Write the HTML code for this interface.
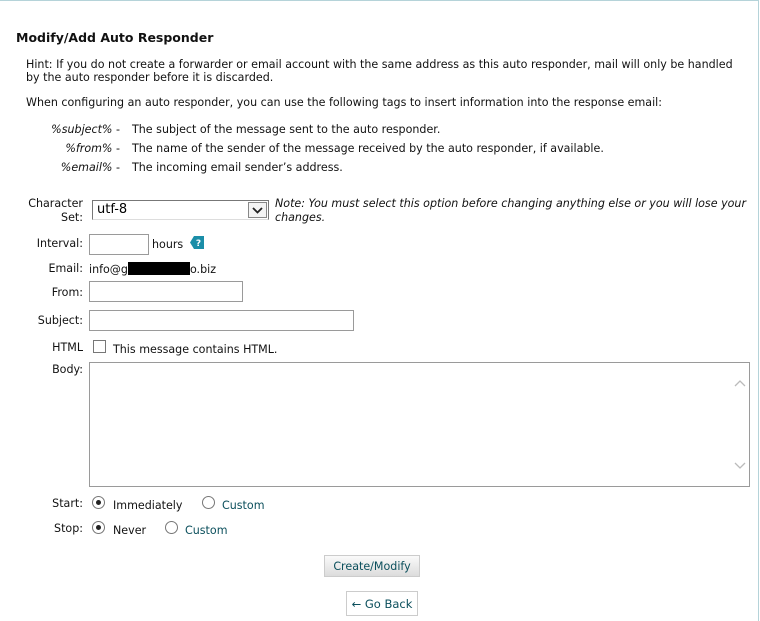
<!DOCTYPE html>
<html><head><meta charset="utf-8"><style>
*{margin:0;padding:0;box-sizing:border-box}
body{width:760px;height:621px;background:#fff;font-family:"DejaVu Sans","Liberation Sans",sans-serif;font-size:11.1px;color:#111;position:relative;overflow:hidden}
.frame{position:absolute;left:0;top:0;width:759px;height:621px;border-top:1px solid #b5d3d9;border-right:1px solid #b5d3d9}
.a{position:absolute;white-space:nowrap}
.lbl{position:absolute;right:677px;text-align:right;white-space:nowrap}
.inp{position:absolute;border:1px solid #9a9a9a;background:#fff}
.radio{position:absolute;width:13px;height:13px;border:1px solid #777;border-radius:50%;background:#fff}
.radio.on::after{content:"";position:absolute;left:3px;top:3px;width:5px;height:5px;border-radius:50%;background:#222}
.teal{color:#0b4f5c}
i{font-style:italic}
</style></head><body>
<div class="frame"></div>
<div class="a" style="left:16px;top:30px;font-weight:bold;font-size:12.5px">Modify/Add Auto Responder</div>
<div class="a" style="left:26px;top:58px;line-height:13px">Hint: If you do not create a forwarder or email account with the same address as this auto responder, mail will only be handled<br>by the auto responder before it is discarded.</div>
<div class="a" style="left:26px;top:96px">When configuring an auto responder, you can use the following tags to insert information into the response email:</div>
<div class="a" style="right:640px;top:123px"><i>%subject%</i> -</div>
<div class="a" style="left:132px;top:123px">The subject of the message sent to the auto responder.</div>
<div class="a" style="right:640px;top:142px"><i>%from%</i> -</div>
<div class="a" style="left:132px;top:142px">The name of the sender of the message received by the auto responder, if available.</div>
<div class="a" style="right:640px;top:161px"><i>%email%</i> -</div>
<div class="a" style="left:132px;top:161px">The incoming email sender’s address.</div>

<div class="lbl" style="top:197px;line-height:14px">Character<br>Set:</div>
<div class="inp" style="left:92px;top:200px;width:177px;height:20px;border-color:#777;border-bottom-color:#ddd;font-size:13px;padding:1px 4px;color:#000">utf-8
<div style="position:absolute;right:1px;top:1px;width:19px;height:16px;border:1px solid #888;background:#f4f4f4">
<svg width="17" height="14" viewBox="0 0 17 14"><path d="M4 5l4.5 4.5L13 5" stroke="#222" stroke-width="1.8" fill="none"/></svg></div></div>
<div class="a" style="left:275px;top:197px;line-height:14px"><i>Note: You must select this option before changing anything else or you will lose your<br>changes.</i></div>

<div class="lbl" style="top:237px">Interval:</div>
<div class="inp" style="left:89px;top:234px;width:60px;height:21px"></div>
<div class="a" style="left:152px;top:238px">hours</div>
<svg class="a" style="left:190px;top:236px" width="14" height="13" viewBox="0 0 14 13"><path d="M4 0H14V13H4L0 6.5Z" fill="#1b8ea8"/><text x="8.5" y="10" font-size="9" font-weight="bold" fill="#fff" text-anchor="middle" font-family="DejaVu Sans">?</text></svg>

<div class="lbl" style="top:262px">Email:</div>
<div class="a" style="left:89px;top:262px">info@g<span style="display:inline-block;width:62px;height:13px;background:#000;vertical-align:-2px"></span>o.biz</div>

<div class="lbl" style="top:286px">From:</div>
<div class="inp" style="left:89px;top:281px;width:154px;height:21px"></div>
<div class="lbl" style="top:314px">Subject:</div>
<div class="inp" style="left:89px;top:310px;width:265px;height:21px"></div>

<div class="lbl" style="top:341px">HTML</div>
<div class="inp" style="left:93px;top:340px;width:13px;height:13px;border-color:#777"></div>
<div class="a" style="left:113px;top:343px">This message contains HTML.</div>

<div class="lbl" style="top:363px">Body:</div>
<div class="inp" style="left:89px;top:362px;width:661px;height:125px">
<svg style="position:absolute;right:3px;top:16px" width="12" height="8"><path d="M1 7l5-5 5 5" stroke="#bbb" stroke-width="1.3" fill="none"/></svg>
<svg style="position:absolute;right:3px;bottom:16px" width="12" height="8"><path d="M1 1l5 5 5-5" stroke="#bbb" stroke-width="1.3" fill="none"/></svg>
</div>

<div class="lbl" style="top:497px">Start:</div>
<div class="radio on" style="left:92px;top:496px"></div>
<div class="a" style="left:113px;top:499px">Immediately</div>
<div class="radio" style="left:202px;top:496px"></div>
<div class="a teal" style="left:222px;top:499px">Custom</div>

<div class="lbl" style="top:522px">Stop:</div>
<div class="radio on" style="left:92px;top:521px"></div>
<div class="a" style="left:113px;top:524px">Never</div>
<div class="radio" style="left:165px;top:521px"></div>
<div class="a teal" style="left:185px;top:524px">Custom</div>

<div class="a teal" style="left:324px;top:555px;width:96px;height:22px;border:1px solid #ccc;background:linear-gradient(#fafafa,#dcdcdc);text-align:center;line-height:21px">Create/Modify</div>
<div class="a teal" style="left:346px;top:591px;width:72px;height:25px;border:1px solid #ccc;background:#fff;text-align:center;line-height:24px;font-size:11.5px">← Go Back</div>
</body></html>
